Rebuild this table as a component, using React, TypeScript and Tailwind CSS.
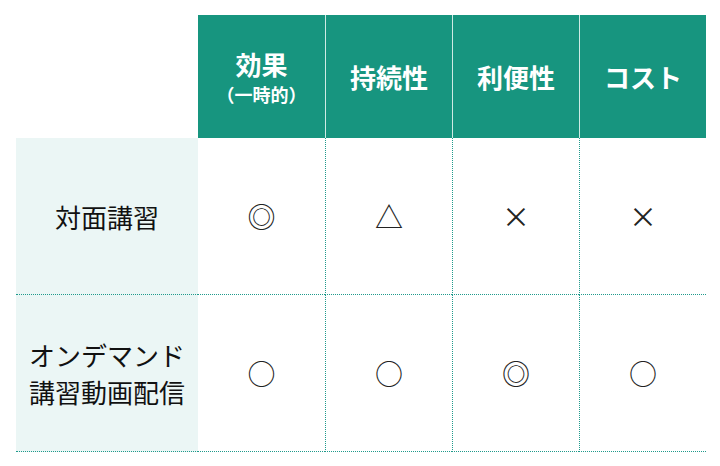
import React from 'react';

const columns = ['持続性', '利便性', 'コスト'];

const rows: Array<{ label: string[]; marks: string[] }> = [
  { label: ['対面講習'], marks: ['◎', '△', '×', '×'] },
  { label: ['オンデマンド', '講習動画配信'], marks: ['○', '○', '◎', '○'] },
];

const App: React.FC = () => {
  return (
    <div
      className="w-[720px] h-[466px] bg-white pt-[15px] pl-[16px]"
      style={{ fontFamily: '"Noto Sans CJK JP", "Noto Sans", sans-serif' }}
    >
      <div className="grid grid-cols-[182px_127px_127px_127px_127px]">
        {/* Header */}
        <div className="h-[123px] bg-white" />
        <div className="h-[123px] bg-[#17957f] flex flex-col items-center justify-center text-white font-bold">
          <span className="text-[26px] leading-[34px]">効果</span>
          <span className="text-[18px] leading-[24px] mt-[1px]">（一時的）</span>
        </div>
        {columns.map(col => (
          <div
            key={col}
            className="h-[123px] bg-[#17957f] border-l border-[#cfeae4] flex items-center justify-center text-white font-bold text-[26px]"
          >
            {col}
          </div>
        ))}

        {/* Body rows */}
        {rows.map((row, r) => (
          <React.Fragment key={r}>
            <div className="h-[157px] bg-[#ebf6f5] border-b border-dotted border-[#1f9a8c] flex flex-col items-center justify-center text-[#111] text-[26px] leading-[37px]">
              {row.label.map(line => (
                <span key={line}>{line}</span>
              ))}
            </div>
            {row.marks.map((mark, i) => (
              <div
                key={i}
                className={
                  'h-[157px] border-b border-dotted border-[#1f9a8c] flex items-center justify-center text-[#222] text-[28px] ' +
                  (i > 0 ? 'border-l' : '')
                }
              >
                {mark}
              </div>
            ))}
          </React.Fragment>
        ))}
      </div>
    </div>
  );
};

export default App;
